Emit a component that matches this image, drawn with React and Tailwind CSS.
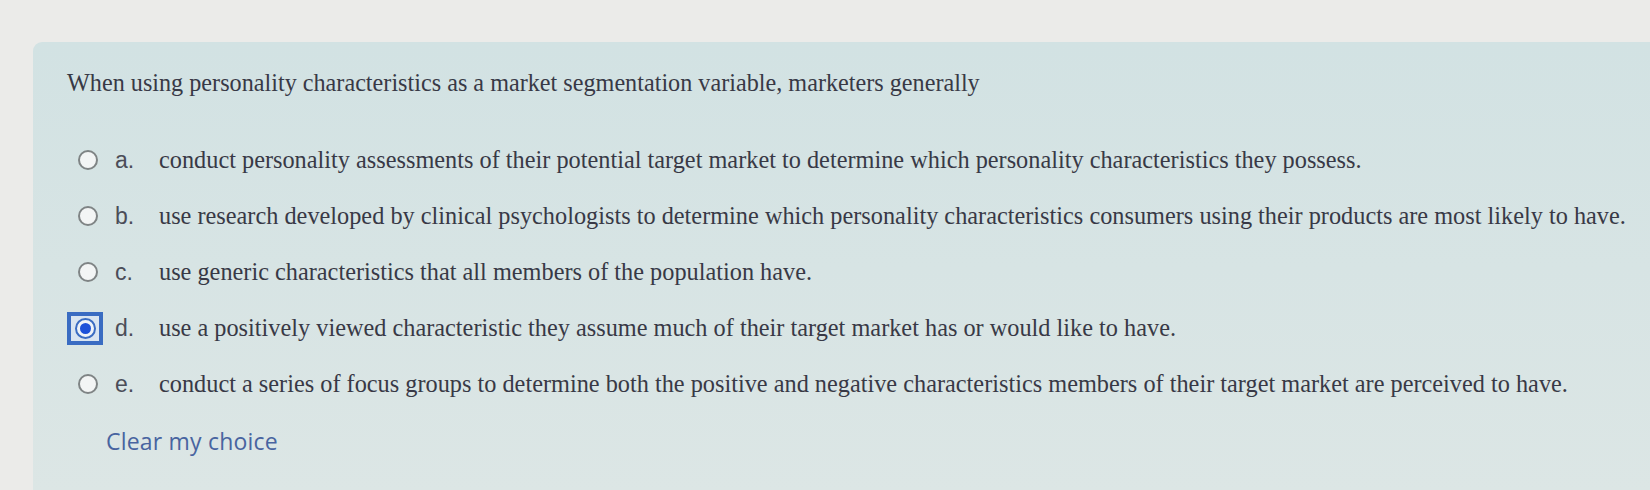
const options = [
  { key: 'a', text: 'conduct personality assessments of their potential target market to determine which personality characteristics they possess.' },
  { key: 'b', text: 'use research developed by clinical psychologists to determine which personality characteristics consumers using their products are most likely to have.' },
  { key: 'c', text: 'use generic characteristics that all members of the population have.' },
  { key: 'd', text: 'use a positively viewed characteristic they assume much of their target market has or would like to have.', selected: true },
  { key: 'e', text: 'conduct a series of focus groups to determine both the positive and negative characteristics members of their target market are perceived to have.' },
];

const Radio = ({ selected }) => {
  if (selected) {
    return (
      <div className="w-[36px] h-[33px] border-[4px] border-[#3a6cc2] bg-[#d9e5f1] flex items-center justify-center">
        <div className="w-[21px] h-[21px] rounded-full border-[2px] border-[#3a6cc2] bg-[#eef3f8] flex items-center justify-center">
          <div className="w-[11px] h-[11px] rounded-full bg-[#1d52d9]"></div>
        </div>
      </div>
    );
  }
  return <div className="ml-[6px] w-[20px] h-[20px] rounded-full border-[2px] border-[#7f8485] bg-[#f3f5f5]"></div>;
};

export default function App() {
  return (
    <div className="w-[1650px] h-[490px] overflow-hidden bg-[#ebebe9] pt-[42px] pl-[33px]">
      <div className="h-full rounded-tl-[9px] bg-gradient-to-b from-[#d2e2e3] to-[#dce6e5]">
        {/* Question */}
        <div
          className="pt-[26px] pl-[34px] text-[24.2px] leading-[30px] text-[#383946]"
          style={{ fontFamily: '"Liberation Serif", serif' }}
        >
          When using personality characteristics as a market segmentation variable, marketers generally
        </div>

        {/* Answers */}
        <div className="mt-[34px] pl-[34px]">
          {options.map((o) => (
            <div key={o.key} className="flex items-center h-[56px]">
              <div className="w-[36px] flex items-center justify-center">
                <Radio selected={o.selected} />
              </div>
              <span
                className="ml-[12px] w-[44px] text-[23px] text-[#4b4d58]"
                style={{ fontFamily: '"Liberation Sans", sans-serif' }}
              >
                {o.key}.
              </span>
              <span
                className="text-[24.3px] text-[#383946]"
                style={{ fontFamily: '"Liberation Serif", serif' }}
              >
                {o.text}
              </span>
            </div>
          ))}
        </div>

        {/* Clear */}
        <div
          className="mt-[14px] pl-[73px] text-[23px] leading-[30px] tracking-[0.2px] text-[#4864a0]"
          style={{ fontFamily: '"Open Sans", sans-serif' }}
        >
          Clear my choice
        </div>
      </div>
    </div>
  );
}
